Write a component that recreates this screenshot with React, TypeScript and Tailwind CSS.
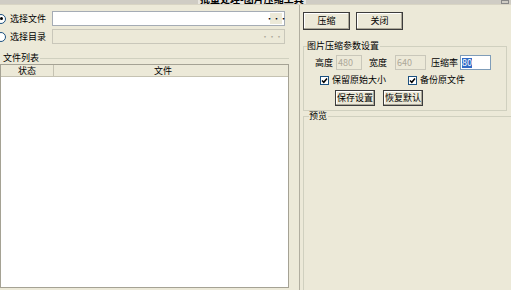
const font = "font-['SimSun','Noto_Sans_CJK_SC',sans-serif]";

function Radio({ checked }: { checked?: boolean }) {
  return (
    <span className="flex h-[10px] w-[10px] shrink-0 items-center justify-center rounded-full border border-[#1c5180] bg-white">
      {checked && <span className="h-[3px] w-[3px] rounded-full bg-black" />}
    </span>
  );
}

function Check({ label }: { label: string }) {
  return (
    <div className="flex items-center gap-[3px]">
      <span className="flex h-[9px] w-[9px] items-center justify-center border border-[#1c5180] bg-white">
        <svg width="7" height="7" viewBox="0 0 7 7">
          <path d="M1 3.5 L2.8 5.3 L6 1.5" stroke="#000" strokeWidth="1.5" fill="none" />
        </svg>
      </span>
      <span>{label}</span>
    </div>
  );
}

function Btn({ label, w, h }: { label: string; w: string; h: string }) {
  return (
    <div
      className={`flex items-center justify-center border border-[#3c3c3c] bg-[#ECE9D8] shadow-[inset_-1px_-1px_0_#aca899,inset_1px_1px_0_#fff] ${w} ${h}`}
    >
      {label}
    </div>
  );
}

export default function App() {
  return (
    <div className={`relative h-[290px] w-[511px] overflow-hidden bg-[#ECE9D8] text-[9px] leading-[10px] text-black ${font}`}>
      {/* title strip, mostly scrolled out of view */}
      <div className="relative h-[5px] overflow-hidden border-b border-[#d8d4c4] bg-[#cfccc4]">
        <div className="absolute left-[198px] top-[-7px] bg-[#e8e6e0] px-[2px] text-[10px] font-bold leading-[11px]">
          批量处理-图片压缩工具
        </div>
        <div className="absolute right-[2px] top-0 h-[4px] w-[8px] border border-[#888]" />
      </div>

      <div className="flex h-[285px]">
        {/* left panel */}
        <div className="flex w-[289px] flex-col pb-[2px] pt-[6px]">
          <div className="flex h-[15px] items-center">
            <div className="-ml-[4px] flex w-[56px] items-center gap-[4px]">
              <Radio checked />
              <span>选择文件</span>
            </div>
            <div className="flex h-[15px] w-[233px] items-center justify-end border border-[#a5acb5] bg-white pr-[2px]">
              <span className="flex h-[11px] w-[12px] items-center justify-center bg-[#ECE9D8] text-[8px] tracking-[-1px]">···</span>
            </div>
          </div>
          <div className="mt-[3px] flex h-[15px] items-center">
            <div className="-ml-[4px] flex w-[56px] items-center gap-[4px]">
              <Radio />
              <span>选择目录</span>
            </div>
            <div className="flex h-[15px] w-[233px] items-center justify-end border border-[#c9c7ba] bg-[#ECE9D8] pr-[2px]">
              <span className="text-[8px] tracking-[-1px] text-[#aca899]">···</span>
            </div>
          </div>

          <div className="mt-[9px] flex items-center">
            <span className="pl-[3px]">文件列表</span>
            <div className="ml-[1px] h-px flex-1 bg-[#d0d0bf]" />
          </div>
          <div className="mt-[1px] flex flex-1 flex-col border border-[#a5a294] bg-white">
            <div className="flex h-[12px] border-b border-[#c5c2b2] bg-[#ECE9D8]">
              <div className="flex w-[53px] items-center justify-center border-r border-[#c5c2b2]">状态</div>
              <div className="flex flex-1 items-center justify-center pr-[16px]">文件</div>
            </div>
          </div>
        </div>

        {/* splitter */}
        <div className="w-[10px]" />

        {/* right panel */}
        <div className="flex flex-1 flex-col border-l border-[#b0ad9f] pl-[3px] pt-[7px]">
          <div className="flex gap-[6px]">
            <Btn label="压缩" w="w-[47px]" h="h-[18px]" />
            <Btn label="关闭" w="w-[47px]" h="h-[18px]" />
          </div>

          <div className="relative mt-[16px] mr-[4px] h-[65px] border border-[#d0d0bf] pt-[8px]">
            <span className="absolute left-[3px] top-[-6px] bg-[#ECE9D8] pr-[1px]">图片压缩参数设置</span>
            <div className="flex items-center pl-[11px]">
              <span>高度</span>
              <div className="ml-[3px] flex h-[15px] w-[26px] items-center border border-[#c9c7ba] pl-[1px] text-[#aca899]">480</div>
              <span className="ml-[7px]">宽度</span>
              <div className="ml-[8px] flex h-[15px] w-[31px] items-center border border-[#c9c7ba] pl-[1px] text-[#aca899]">640</div>
              <span className="ml-[5px]">压缩率</span>
              <div className="ml-[2px] flex h-[15px] w-[31px] items-center border border-[#7f9db9] bg-white pl-[1px]">
                <span className="bg-[#316ac5] text-white">80</span>
              </div>
            </div>
            <div className="mt-[5px] flex pl-[16px]">
              <div className="w-[88px]">
                <Check label="保留原始大小" />
              </div>
              <Check label="备份原文件" />
            </div>
            <div className="mt-[5px] flex gap-[8px] pl-[31px]">
              <Btn label="保存设置" w="w-[40px]" h="h-[16px]" />
              <Btn label="恢复默认" w="w-[40px]" h="h-[16px]" />
            </div>
          </div>

          <div className="relative mt-[5px] flex-1 border-l border-t border-[#d0d0bf]">
            <span className="absolute left-[5px] top-[-6px] bg-[#ECE9D8] pr-[1px]">预览</span>
          </div>
        </div>
      </div>
    </div>
  );
}
